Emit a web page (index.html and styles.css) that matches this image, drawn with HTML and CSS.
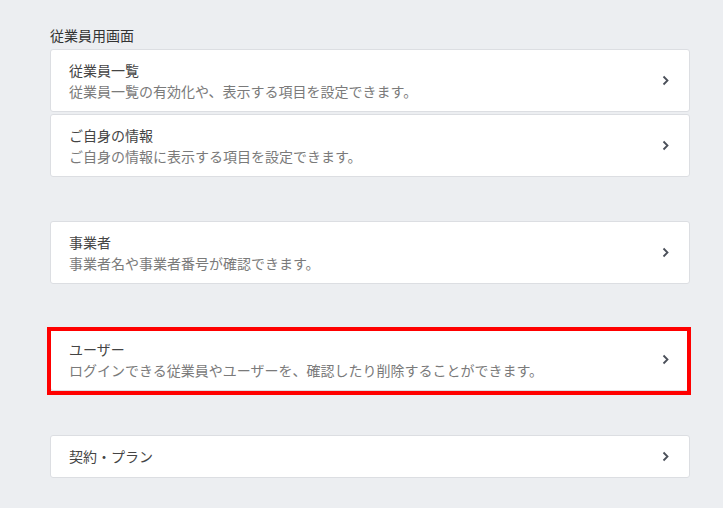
FILE: index.html
```html
<!DOCTYPE html>
<html lang="ja">

<head>
  <meta charset="UTF-8">
  <meta name="viewport" content="width=device-width, initial-scale=1.0">
  <title>設定</title>
  <link rel="stylesheet" href="styles.css">
</head>

<body>
  <div class="page">

    <div class="group">
      <div class="group-title">従業員用画面</div>
      <a class="card">
        <div class="card-text">
          <div class="card-title">従業員一覧</div>
          <div class="card-desc">従業員一覧の有効化や、表示する項目を設定できます。</div>
        </div>
        <svg class="chevron" width="7" height="11" viewBox="0 0 7 11"><path d="M1.5 1.5 L5.5 5.5 L1.5 9.5" fill="none" stroke="#4a4f59" stroke-width="1.8"/></svg>
      </a>
      <a class="card">
        <div class="card-text">
          <div class="card-title">ご自身の情報</div>
          <div class="card-desc">ご自身の情報に表示する項目を設定できます。</div>
        </div>
        <svg class="chevron" width="7" height="11" viewBox="0 0 7 11"><path d="M1.5 1.5 L5.5 5.5 L1.5 9.5" fill="none" stroke="#4a4f59" stroke-width="1.8"/></svg>
      </a>
    </div>

    <div class="group">
      <a class="card">
        <div class="card-text">
          <div class="card-title">事業者</div>
          <div class="card-desc">事業者名や事業者番号が確認できます。</div>
        </div>
        <svg class="chevron" width="7" height="11" viewBox="0 0 7 11"><path d="M1.5 1.5 L5.5 5.5 L1.5 9.5" fill="none" stroke="#4a4f59" stroke-width="1.8"/></svg>
      </a>
    </div>

    <div class="group">
      <a class="card highlight">
        <div class="card-text">
          <div class="card-title">ユーザー</div>
          <div class="card-desc">ログインできる従業員やユーザーを、確認したり削除することができます。</div>
        </div>
        <svg class="chevron" width="7" height="11" viewBox="0 0 7 11"><path d="M1.5 1.5 L5.5 5.5 L1.5 9.5" fill="none" stroke="#4a4f59" stroke-width="1.8"/></svg>
      </a>
    </div>

    <div class="group">
      <a class="card">
        <div class="card-text">
          <div class="card-title">契約・プラン</div>
        </div>
        <svg class="chevron" width="7" height="11" viewBox="0 0 7 11"><path d="M1.5 1.5 L5.5 5.5 L1.5 9.5" fill="none" stroke="#4a4f59" stroke-width="1.8"/></svg>
      </a>
    </div>

  </div>
</body>

</html>
```

FILE: styles.css
```css
body {
  margin: 0;
  background: #eceef1;
  font-family: "Noto Sans CJK JP", "Noto Sans", sans-serif;
  font-size: 14px;
  color: #333;
}

.page {
  width: 640px;
  padding: 25px 0 0 50px;
}

.group {
  margin-bottom: 44px;
}

.group-title {
  line-height: 20px;
  margin-bottom: 4px;
  color: #333;
}

.card {
  display: flex;
  align-items: center;
  position: relative;
  background: #fff;
  border: 1px solid #dcdee2;
  border-radius: 3px;
  padding: 10px 20px 10px 18px;
  cursor: pointer;
}

.card + .card {
  margin-top: 2px;
}

.card-text {
  flex: 1;
}

.card-title {
  line-height: 21px;
  color: #444;
}

.card-desc {
  line-height: 20px;
  color: #7a7a7a;
}

.chevron {
  display: block;
  flex: none;
}

.highlight::after {
  content: "";
  position: absolute;
  top: -2px;
  left: -4px;
  right: -2px;
  bottom: -5px;
  border: 4px solid #f00;
}
```
